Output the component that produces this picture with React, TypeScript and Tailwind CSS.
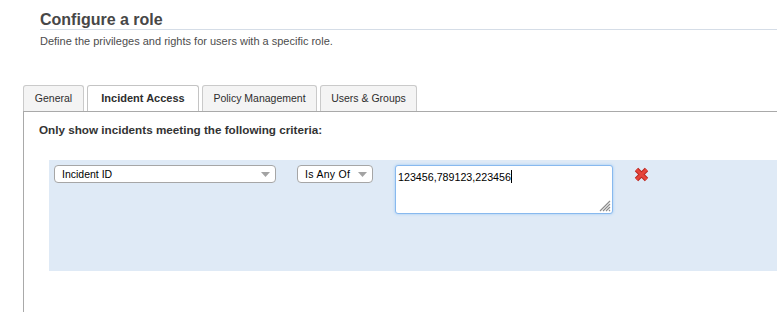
import React from 'react';

const tabs = [
    { label: 'General', w: 'w-[61px]', active: false },
    { label: 'Incident Access', w: 'w-[112px]', active: true },
    { label: 'Policy Management', w: 'w-[115px]', active: false },
    { label: 'Users & Groups', w: 'w-[97px]', active: false },
];

function Arrow() {
    return (
        <svg width="9" height="5" viewBox="0 0 9 5" className="shrink-0">
            <path d="M0 0 L9 0 L4.5 5 Z" fill="#a3a3a3" />
        </svg>
    );
}

function Select({ label, className }: { label: string; className: string }) {
    return (
        <div
            className={`h-[18px] flex items-center justify-between pl-[7px] pr-[5px] bg-white border border-[#a6a6a6] rounded-[4px] text-[10.5px] text-black ${className}`}
        >
            <span className="pt-[2px]">{label}</span>
            <Arrow />
        </div>
    );
}

export default function App() {
    return (
        <div className="w-[777px] h-[312px] overflow-hidden bg-white font-['Liberation_Sans',Arial,sans-serif]">
            <div className="pl-[40px] pt-[10px]">
                <h1 className="text-[16px] leading-[19px] font-bold text-[#474747] border-b border-[#d5dde7]">
                    Configure a role
                </h1>
                <p className="mt-[5px] text-[11px] leading-[13px] text-[#4d4d4d]">
                    Define the privileges and rights for users with a specific role.
                </p>
            </div>

            <div className="ml-[23px] mt-[37px]">
                <div className="flex gap-[3px] h-[26px]">
                    {tabs.map((t) => (
                        <div
                            key={t.label}
                            className={`${t.w} h-[26px] flex items-center justify-center border border-b-0 rounded-t-[3px] ${
                                t.active
                                    ? 'bg-white border-[#c4c4c4] text-[11px] font-bold text-[#2e2e2e]'
                                    : 'bg-[#f4f4f4] border-[#cacaca] text-[10.5px] text-[#2e2e2e]'
                            }`}
                        >
                            {t.label}
                        </div>
                    ))}
                </div>

                <div className="h-[220px] border-t border-l border-[#a9a9a9] pt-[11px] pl-[15px]">
                    <p className="text-[11.7px] leading-[14px] font-bold text-[#333]">
                        Only show incidents meeting the following criteria:
                    </p>

                    <div className="mt-[23px] ml-[10px] h-[111px] bg-[#dfeaf6] p-[5px] flex items-start">
                        <Select label="Incident ID" className="w-[222px]" />
                        <Select label="Is Any Of" className="w-[76px] ml-[21px] tracking-[0.3px]" />

                        <div className="relative ml-[22px] w-[218px] h-[49px] bg-white border border-[#88b9ee] rounded-[3px] shadow-[0_0_3px_#9cc8f5] pl-[2px] pt-[4px] text-[10.7px] leading-[12px] text-black">
                            <span>123456,789123,223456</span>
                            <span className="inline-block align-[-2px] w-px h-[13px] bg-black" />
                            <svg
                                width="12"
                                height="12"
                                viewBox="0 0 12 12"
                                className="absolute right-[1px] bottom-[1px]"
                            >
                                <path
                                    d="M11 1 L1 11 M11 4 L4 11 M11 7 L7 11 M11 10 L10 11"
                                    stroke="#8c8c8c"
                                    strokeWidth="1.2"
                                />
                            </svg>
                        </div>

                        <svg width="15" height="15" viewBox="0 0 15 15" className="ml-[21px] mt-[2px]">
                            <path d="M2.5 2.5 L12.5 12.5 M12.5 2.5 L2.5 12.5" stroke="#b8261f" strokeWidth="4.8" />
                            <path d="M2.5 2.5 L12.5 12.5 M12.5 2.5 L2.5 12.5" stroke="#e5443a" strokeWidth="3" />
                        </svg>
                    </div>
                </div>
            </div>
        </div>
    );
}
